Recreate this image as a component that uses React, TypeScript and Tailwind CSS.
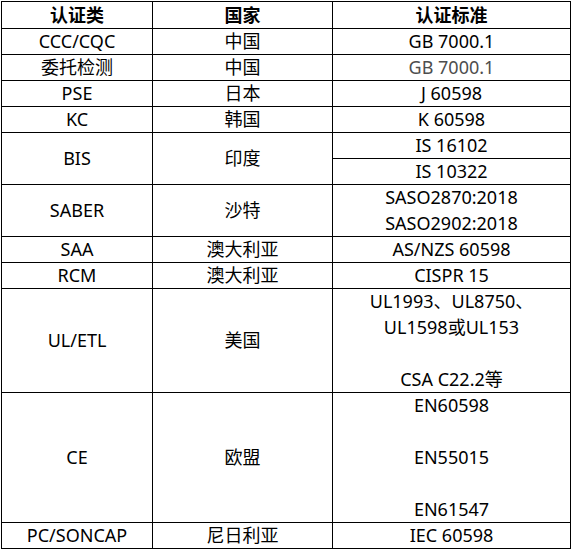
export default function App() {
  const cell =
    "bg-white flex flex-col items-center justify-center text-center leading-[26px] pb-px";

  return (
    <div className="w-[572px] h-[550px] bg-white pl-px pt-px">
      <div
        className="grid w-fit grid-cols-[150px_179px_237px] grid-rows-[26px_repeat(20,25px)] gap-px bg-black p-px text-[18px] text-black"
        style={{ fontFamily: '"Noto Sans", "Noto Sans CJK SC", sans-serif' }}
      >
        <div className={`${cell} font-bold`}>认证类</div>
        <div className={`${cell} font-bold`}>国家</div>
        <div className={`${cell} font-bold`}>认证标准</div>

        <div className={cell}>CCC/CQC</div>
        <div className={cell}>中国</div>
        <div className={cell}>GB 7000.1</div>

        <div className={cell}>委托检测</div>
        <div className={cell}>中国</div>
        <div className={`${cell} text-[#4d4d4d]`}>GB 7000.1</div>

        <div className={cell}>PSE</div>
        <div className={cell}>日本</div>
        <div className={cell}>J 60598</div>

        <div className={cell}>KC</div>
        <div className={cell}>韩国</div>
        <div className={cell}>K 60598</div>

        <div className={`${cell} row-span-2`}>BIS</div>
        <div className={`${cell} row-span-2`}>印度</div>
        <div className={cell}>IS 16102</div>
        <div className={cell}>IS 10322</div>

        <div className={`${cell} row-span-2`}>SABER</div>
        <div className={`${cell} row-span-2`}>沙特</div>
        <div className={`${cell} row-span-2`}>
          <span>SASO2870:2018</span>
          <span>SASO2902:2018</span>
        </div>

        <div className={cell}>SAA</div>
        <div className={cell}>澳大利亚</div>
        <div className={cell}>AS/NZS 60598</div>

        <div className={cell}>RCM</div>
        <div className={cell}>澳大利亚</div>
        <div className={cell}>CISPR 15</div>

        <div className={`${cell} row-span-4`}>UL/ETL</div>
        <div className={`${cell} row-span-4`}>美国</div>
        <div className={`${cell} row-span-4`}>
          <span>UL1993、UL8750、</span>
          <span>UL1598或UL153</span>
          <span>&nbsp;</span>
          <span>CSA C22.2等</span>
        </div>

        <div className={`${cell} row-span-5`}>CE</div>
        <div className={`${cell} row-span-5`}>欧盟</div>
        <div className={`${cell} row-span-5`}>
          <span>EN60598</span>
          <span>&nbsp;</span>
          <span>EN55015</span>
          <span>&nbsp;</span>
          <span>EN61547</span>
        </div>

        <div className={cell}>PC/SONCAP</div>
        <div className={cell}>尼日利亚</div>
        <div className={cell}>IEC 60598</div>
      </div>
    </div>
  );
}
